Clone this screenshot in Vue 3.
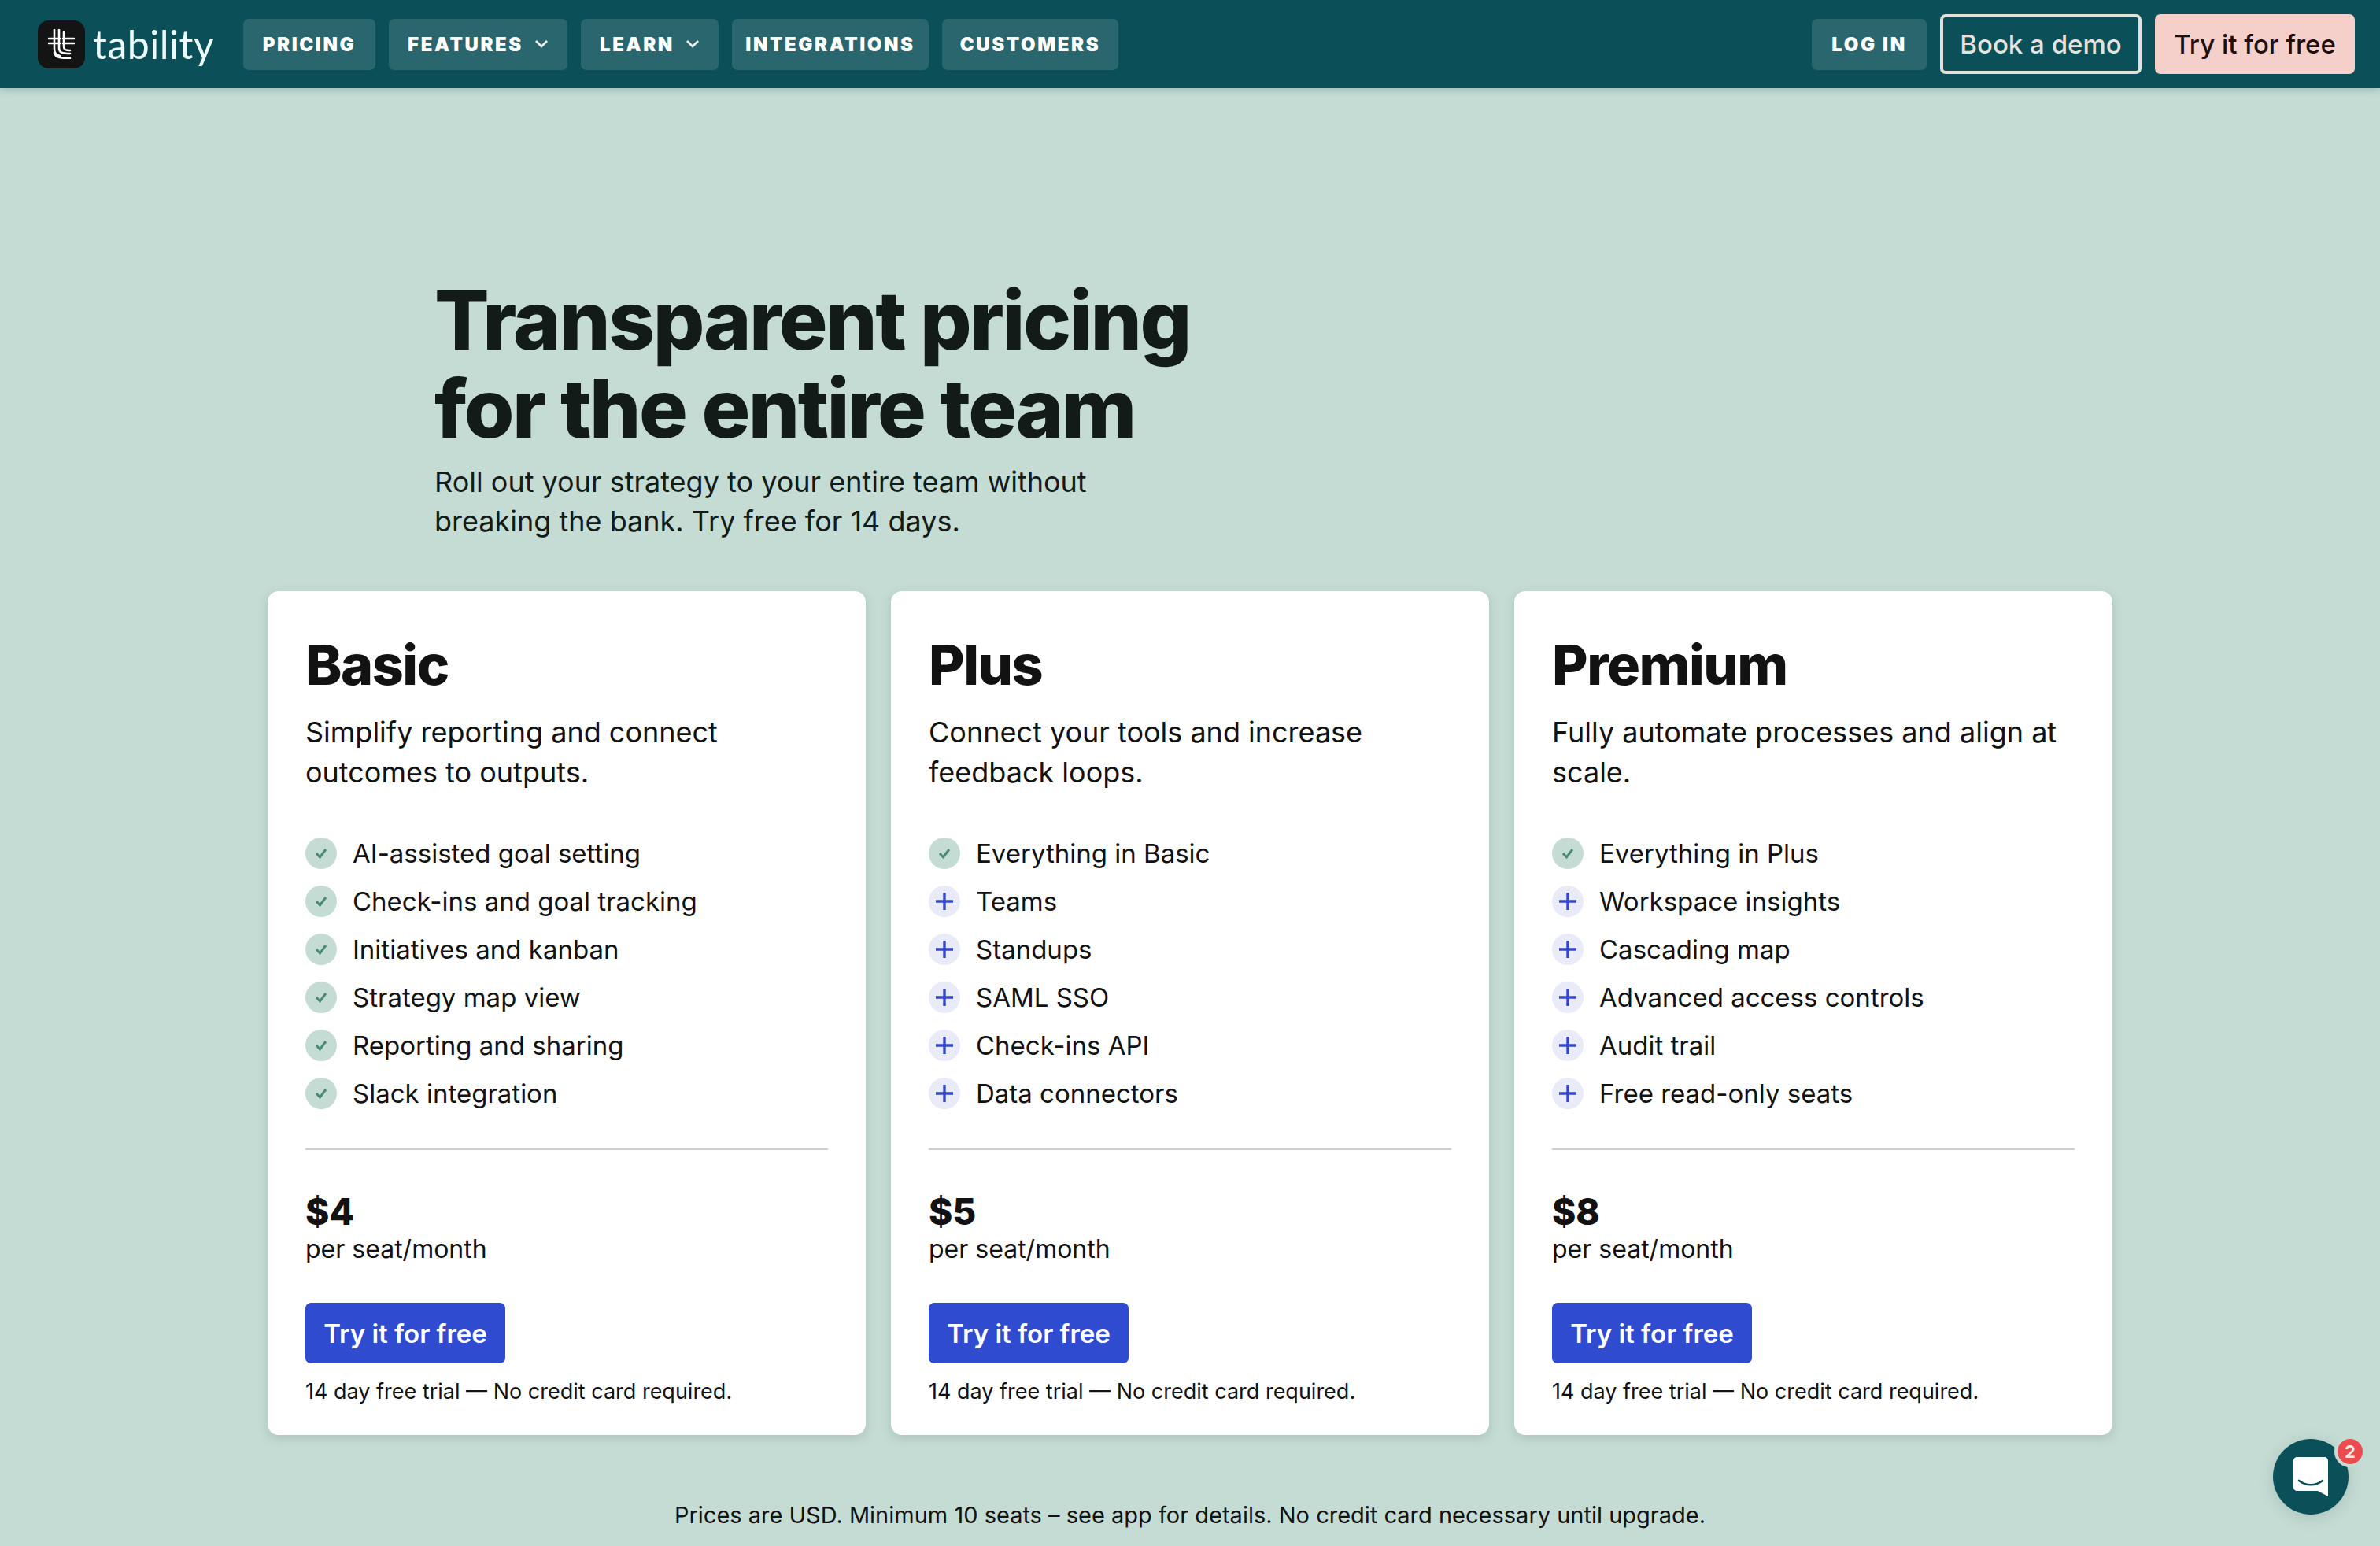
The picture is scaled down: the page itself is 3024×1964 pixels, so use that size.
<template>
  <div class="page">
    <!-- Top nav -->
    <header class="topbar">
      <div class="brand">
        <span class="brand-mark">
          <svg width="34" height="38" viewBox="0 0 34 38" fill="none" stroke="#fff" stroke-width="2.6" stroke-linecap="round">
            <path d="M1 12H15M1 18H15" />
            <path d="M8 1V25C8 30 10 33 15 34" />
            <path d="M14 1V24C14 29 17 31 28 31" />
            <path d="M20 4V22C20 26 22 27 28 27" />
            <path d="M19 12H33M19 18H33" />
            <path d="M8 30C10 36 14 37 28 37" />
          </svg>
        </span>
        <span class="brand-name">tability</span>
      </div>
      <nav class="nav-left">
        <a v-for="link in navLinks" :key="link.label" class="nav-btn" :style="{ width: link.width + 'px' }">
          {{ link.label }}
          <svg v-if="link.menu" class="chevron" width="18" height="12" viewBox="0 0 18 12" fill="none" stroke="#fff" stroke-width="2.6">
            <path d="M2 2L9 9L16 2" />
          </svg>
        </a>
      </nav>
      <div class="nav-right">
        <a class="nav-btn login">LOG IN</a>
        <a class="demo-btn">Book a demo</a>
        <a class="try-btn">Try it for free</a>
      </div>
    </header>

    <main class="content">
      <section class="hero">
        <h1>Transparent pricing<br />for the entire team</h1>
        <p>Roll out your strategy to your entire team without<br />breaking the bank. Try free for 14 days.</p>
      </section>

      <section class="plans">
        <article v-for="plan in plans" :key="plan.name" class="plan">
          <h2>{{ plan.name }}</h2>
          <p class="plan-desc">{{ plan.desc }}</p>
          <ul class="features">
            <li v-for="(item, i) in plan.features" :key="item">
              <span :class="['bullet', plan.name === 'Basic' || i === 0 ? 'bullet-check' : 'bullet-plus']">
                <svg v-if="plan.name === 'Basic' || i === 0" width="20" height="20" viewBox="0 0 20 20" fill="none" stroke="#4a8a78" stroke-width="3">
                  <path d="M4 10L8.5 15L16 5" />
                </svg>
                <svg v-else width="24" height="24" viewBox="0 0 24 24" fill="none" stroke="#3448c5" stroke-width="3.4">
                  <path d="M12 1V23M1 12H23" />
                </svg>
              </span>
              {{ item }}
            </li>
          </ul>
          <hr />
          <div class="price">{{ plan.price }}</div>
          <div class="per-seat">per seat/month</div>
          <a class="cta">Try it for free</a>
          <p class="trial">14 day free trial — No credit card required.</p>
        </article>
      </section>

      <p class="footnote">Prices are USD. Minimum 10 seats – see app for details. No credit card necessary until upgrade.</p>
    </main>

    <!-- Chat launcher -->
    <div class="chat">
      <svg width="44" height="50" viewBox="0 0 44 50">
        <path d="M5 0H39C42 0 44 2 44 5V50L31 43H5C2 43 0 41 0 38V5C0 2 2 0 5 0Z" fill="#fff" />
        <path d="M7 30C16 37 28 37 37 30" fill="none" stroke="#0b5058" stroke-width="2.6" stroke-linecap="round" />
      </svg>
      <span class="chat-badge">2</span>
    </div>
  </div>
</template>

<script setup>
const navLinks = [
  { label: 'PRICING', width: 168 },
  { label: 'FEATURES', width: 227, menu: true },
  { label: 'LEARN', width: 175, menu: true },
  { label: 'INTEGRATIONS', width: 250 },
  { label: 'CUSTOMERS', width: 224 }
]

const plans = [
  {
    name: 'Basic',
    desc: 'Simplify reporting and connect outcomes to outputs.',
    price: '$4',
    features: [
      'AI-assisted goal setting',
      'Check-ins and goal tracking',
      'Initiatives and kanban',
      'Strategy map view',
      'Reporting and sharing',
      'Slack integration'
    ]
  },
  {
    name: 'Plus',
    desc: 'Connect your tools and increase feedback loops.',
    price: '$5',
    features: ['Everything in Basic', 'Teams', 'Standups', 'SAML SSO', 'Check-ins API', 'Data connectors']
  },
  {
    name: 'Premium',
    desc: 'Fully automate processes and align at scale.',
    price: '$8',
    features: [
      'Everything in Plus',
      'Workspace insights',
      'Cascading map',
      'Advanced access controls',
      'Audit trail',
      'Free read-only seats'
    ]
  }
]
</script>

<style>
html,
body {
  margin: 0;
  background: #c5dcd4;
}
</style>

<style scoped>
.page {
  height: 1964px;
  overflow: hidden;
  background: #c5dcd4;
  color: #121212;
  font-family: Inter, "Liberation Sans", sans-serif;
}

/* Top nav */
.topbar {
  height: 112px;
  box-sizing: border-box;
  display: flex;
  align-items: center;
  padding: 0 32px 0 48px;
  background: #0b5058;
  box-shadow: 0 2px 10px rgba(11, 80, 88, 0.25);
}

.brand {
  display: flex;
  align-items: center;
  gap: 10px;
  width: 261px;
}

.brand-mark {
  width: 60px;
  height: 61px;
  border-radius: 14px;
  background: #141414;
  display: flex;
  align-items: center;
  justify-content: center;
}

.brand-name {
  font-family: Lato, sans-serif;
  font-size: 50px;
  line-height: 1;
  color: #ecfbfb;
  letter-spacing: 0.5px;
}

.nav-left {
  display: flex;
  gap: 17px;
}

.nav-right {
  margin-left: auto;
  display: flex;
  align-items: center;
  gap: 17px;
}

.nav-btn {
  height: 65px;
  box-sizing: border-box;
  display: flex;
  align-items: center;
  justify-content: center;
  gap: 14px;
  border-radius: 7px;
  background: rgba(255, 255, 255, 0.13);
  color: #fff;
  font-size: 24px;
  font-weight: 900;
  letter-spacing: 2.6px;
}

.login {
  width: 146px;
}

.demo-btn,
.try-btn {
  height: 76px;
  box-sizing: border-box;
  display: flex;
  align-items: center;
  justify-content: center;
  border-radius: 7px;
  font-size: 33px;
  font-weight: 500;
}

.demo-btn {
  width: 256px;
  border: 4px solid #e4e0da;
  color: #e8e2de;
}

.try-btn {
  width: 254px;
  background: #f5cfc9;
  color: #1f0f0d;
}

/* Hero */
.content {
  width: 2344px;
  margin: 0 auto;
}

.hero {
  padding: 239px 0 0 212px;
}

.hero h1 {
  margin: 0;
  font-size: 103px;
  line-height: 112px;
  font-weight: 800;
  letter-spacing: -2.5px;
  color: #121b18;
}

.hero p {
  margin: 12px 0 0;
  font-size: 36px;
  line-height: 50px;
  color: #121b18;
}

/* Plans */
.plans {
  margin-top: 64px;
  display: grid;
  grid-template-columns: repeat(3, 760px);
  gap: 32px;
}

.plan {
  height: 1072px;
  box-sizing: border-box;
  padding: 48px;
  background: #fff;
  border-radius: 14px;
  box-shadow: 0 4px 14px rgba(60, 100, 90, 0.2);
}

.plan h2 {
  margin: 0;
  font-size: 70px;
  line-height: 92px;
  font-weight: 800;
  letter-spacing: -1.5px;
}

.plan-desc {
  margin: 14px 0 0;
  font-size: 36px;
  line-height: 51px;
}

.features {
  list-style: none;
  margin: 46px 0 0;
  padding: 0;
}

.features li {
  height: 61px;
  display: flex;
  align-items: center;
  gap: 20px;
  font-size: 33px;
}

.bullet {
  width: 40px;
  height: 40px;
  border-radius: 50%;
  display: flex;
  align-items: center;
  justify-content: center;
  flex: none;
}

.bullet-check {
  background: #c5dcd4;
}

.bullet-plus {
  background: #e9ebf8;
}

hr {
  margin: 40px 0 0;
  height: 2px;
  border: 0;
  background: #cfcfcf;
}

.price {
  margin-top: 50px;
  font-size: 46px;
  line-height: 56px;
  font-weight: 800;
}

.per-seat {
  font-size: 32px;
  line-height: 40px;
}

.cta {
  margin-top: 48px;
  width: 254px;
  height: 77px;
  display: flex;
  align-items: center;
  justify-content: center;
  border-radius: 7px;
  background: #2f4bcf;
  color: #fff;
  font-size: 33px;
  font-weight: 600;
}

.trial {
  margin: 18px 0 0;
  font-size: 27px;
  line-height: 36px;
}

.footnote {
  margin: 84px 0 0;
  text-align: center;
  font-size: 29px;
  line-height: 36px;
}

/* Chat launcher */
.chat {
  position: fixed;
  left: 2888px;
  top: 1828px;
  width: 96px;
  height: 96px;
  border-radius: 50%;
  background: #0b5058;
  display: flex;
  align-items: center;
  justify-content: center;
  box-shadow: 0 4px 20px rgba(60, 100, 90, 0.2);
}

.chat-badge {
  position: absolute;
  left: 78px;
  top: -4px;
  width: 32px;
  height: 32px;
  border-radius: 50%;
  background: #ec4c50;
  border: 4px solid #c5dcd4;
  color: #fbe9e4;
  font-size: 22px;
  font-weight: 700;
  display: flex;
  align-items: center;
  justify-content: center;
}
</style>
